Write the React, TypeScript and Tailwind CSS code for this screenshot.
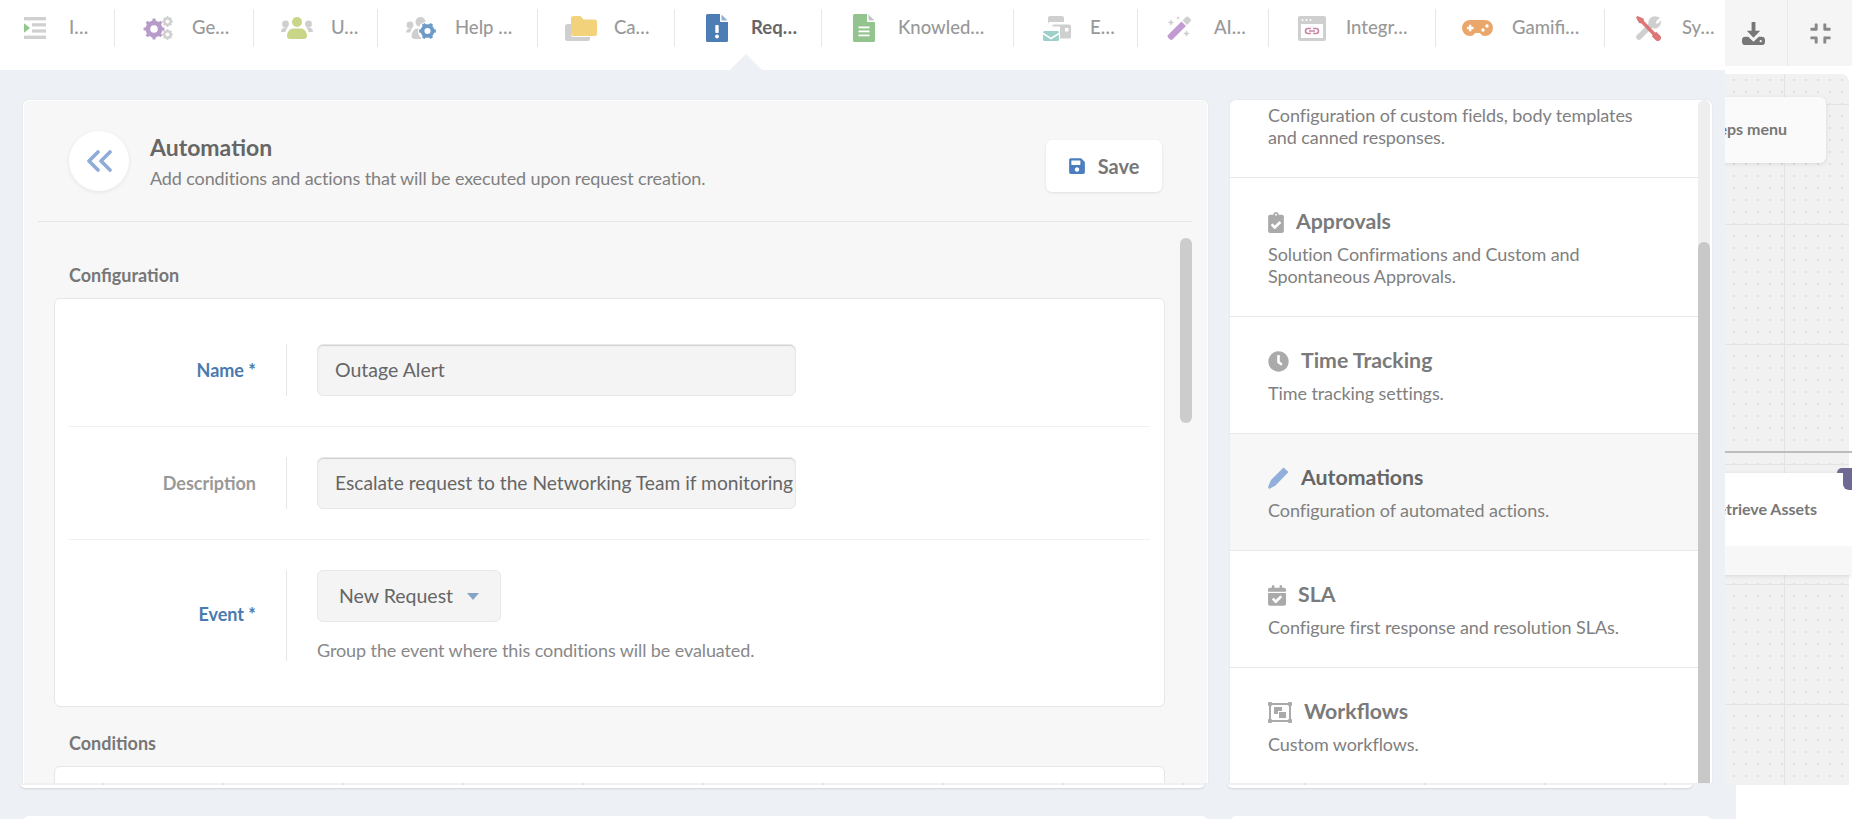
import { FaCalendarCheck, FaClipboardCheck, FaClock, FaCompress, FaSave } from "react-icons/fa";

const gear = (cx: number, cy: number, r: number, teeth = 8) => {
  let d = "";
  const step = (Math.PI * 2) / teeth;
  for (let i = 0; i < teeth; i++) {
    const a = i * step;
    const pts = [
      [a - step * 0.5, r * 0.8],
      [a - step * 0.24, r * 0.82],
      [a - step * 0.17, r],
      [a + step * 0.17, r],
      [a + step * 0.24, r * 0.82],
    ];
    pts.forEach(([t, rad], j) => {
      const x = cx + Math.cos(t) * rad;
      const y = cy + Math.sin(t) * rad;
      d += `${i === 0 && j === 0 ? "M" : "L"}${x.toFixed(2)} ${y.toFixed(2)}`;
    });
  }
  const h = r * 0.36;
  return `${d}Z M${cx - h} ${cy}a${h} ${h} 0 1 0 ${h * 2} 0a${h} ${h} 0 1 0 ${-h * 2} 0Z`;
};

function IndentIcon() {
  return (
    <svg viewBox="0 0 22 22" className="w-[22px] h-[22px] shrink-0">
      <rect y="0" width="22" height="3.4" fill="#d0d0d0" />
      <rect x="8" y="6.2" width="14" height="3.2" fill="#d0d0d0" />
      <rect x="8" y="12.4" width="14" height="3.2" fill="#d0d0d0" />
      <rect y="18.6" width="22" height="3.4" fill="#d0d0d0" />
      <path d="M0 6.2 6 11 0 15.8Z" fill="#8fc78f" />
    </svg>
  );
}

function GearsIcon() {
  return (
    <svg viewBox="0 0 30 24" className="w-[30px] h-[24px] shrink-0">
      <path d={gear(11, 13, 10.5)} fill="#b79cc9" fillRule="evenodd" />
      <path d={gear(24.5, 5.5, 5.5)} fill="#cfcfcf" fillRule="evenodd" />
      <path d={gear(24.5, 18.5, 5.5)} fill="#cfcfcf" fillRule="evenodd" />
    </svg>
  );
}

function UsersIcon() {
  return (
    <svg viewBox="0 0 32 22" className="w-[32px] h-[22px] shrink-0">
      <circle cx="4.5" cy="7" r="3.4" fill="#cfcfcf" />
      <circle cx="27.5" cy="7" r="3.4" fill="#cfcfcf" />
      <path d="M0 15c0-3 2-4.500 4-4.500h3c-1.500 1.200-2.300 2.700-2.500 4.500Z" fill="#cfcfcf" />
      <path d="M32 15c0-3-2-4.500-4-4.500h-3c1.500 1.200 2.300 2.700 2.500 4.500Z" fill="#cfcfcf" />
      <circle cx="16" cy="5" r="5" fill="#c9d688" />
      <path d="M6 19c0-4 3-7.500 6-7.500h8c3 0 6 3.500 6 7.500 0 2-1.500 3-3 3H9c-1.500 0-3-1-3-3Z" fill="#c9d688" />
    </svg>
  );
}

function UsersCogIcon() {
  return (
    <svg viewBox="0 0 31 22" className="w-[31px] h-[22px] shrink-0">
      <circle cx="4" cy="8" r="3.4" fill="#cfcfcf" />
      <path d="M0 15.500c0-2.500 2-4 4-4h2.500c-1.500 1.200-2 2.500-2.300 4Z" fill="#cfcfcf" />
      <circle cx="14.500" cy="5" r="5" fill="#cfcfcf" />
      <path d="M5.500 19c0-4 3-7.500 6-7.500h6c3 0 5 3.500 5 7.500v3h-14c-1.500 0-3-1-3-3Z" fill="#cfcfcf" />
      <circle cx="21.500" cy="14" r="9.500" fill="#fff" />
      <path d={gear(21.5, 14, 8.5, 6)} fill="#6d9bc9" fillRule="evenodd" />
    </svg>
  );
}

function FolderIcon() {
  return (
    <svg viewBox="0 0 32 25" className="w-[32px] h-[25px] shrink-0">
      <path d="M2.500 8H6v10.500A2.500 2.500 0 0 0 8.500 21H25v1.500a2.500 2.500 0 0 1-2.500 2.500h-20A2.500 2.500 0 0 1 0 22.500v-12A2.500 2.500 0 0 1 2.500 8Z" fill="#cfcfcf" />
      <path d="M8.500 0h7l3 3.500h11A2.500 2.500 0 0 1 32 6v11.500a2.500 2.500 0 0 1-2.500 2.500h-21A2.500 2.500 0 0 1 6 17.500v-15A2.500 2.500 0 0 1 8.500 0Z" fill="#f3d27c" />
    </svg>
  );
}

function FileAlertIcon() {
  return (
    <svg viewBox="0 0 22 28" className="w-[22px] h-[28px] shrink-0">
      <path d="M1.500 0H14v7a1 1 0 0 0 1 1h7v18.500a1.500 1.500 0 0 1-1.500 1.500h-19A1.500 1.500 0 0 1 0 26.500v-25A1.500 1.500 0 0 1 1.500 0Z" fill="#4c7db5" />
      <path d="M15.500 0.500 21.500 6.500H15.500Z" fill="#8fb0d6" />
      <rect x="9.300" y="11" width="3.400" height="8" rx="0.800" fill="#fff" />
      <circle cx="11" cy="22.500" r="2" fill="#fff" />
    </svg>
  );
}

function FileLinesIcon() {
  return (
    <svg viewBox="0 0 22 28" className="w-[22px] h-[28px] shrink-0">
      <path d="M1.500 0H14v7a1 1 0 0 0 1 1h7v18.500a1.500 1.500 0 0 1-1.500 1.500h-19A1.500 1.500 0 0 1 0 26.500v-25A1.500 1.500 0 0 1 1.500 0Z" fill="#93c48f" />
      <path d="M15.500 0.500 21.500 6.500H15.500Z" fill="#c4c4c4" />
      <rect x="5.500" y="12.500" width="11" height="1.800" fill="#fff" />
      <rect x="5.500" y="16.500" width="11" height="1.800" fill="#fff" />
      <rect x="5.500" y="20.500" width="11" height="1.800" fill="#fff" />
    </svg>
  );
}

function MessagesIcon() {
  return (
    <svg viewBox="0 0 28 25" className="w-[28px] h-[25px] shrink-0">
      <path d="M5 2a2 2 0 0 1 2-2h12a2 2 0 0 1 2 2v4H7a2 2 0 0 0-2 2Z" fill="#cfcfcf" />
      <path d="M9 10.500a2 2 0 0 1 2-2h15a2 2 0 0 1 2 2V21a1.500 1.500 0 0 1-1.500 1.500H17V10.500Z" fill="#cfcfcf" />
      <rect x="22" y="12" width="3.500" height="3.500" fill="#fff" />
      <path d="M0 16.500a1.500 1.500 0 0 1 1.500-1.500h13a1.500 1.500 0 0 1 1.500 1.500l-8 5-8-5Z" fill="#9dcfcb" />
      <path d="M0 18.500l8 5 8-5v5a1.500 1.500 0 0 1-1.500 1.500h-13A1.500 1.500 0 0 1 0 23.500Z" fill="#9dcfcb" />
    </svg>
  );
}

function WandIcon() {
  return (
    <svg viewBox="0 0 25 24" className="w-[25px] h-[24px] shrink-0">
      <path d="M1 19 14.500 5.500 19 10 5.500 23.500a2 2 0 0 1-2.500 0l-2-2a2 2 0 0 1 0-2.500Z" fill="#c29bd3" />
      <path d="M15.500 4.500 19 1a2 2 0 0 1 2.500 0l2 2a2 2 0 0 1 0 2.500L20 9Z" fill="#cfcfcf" />
      <path d="M4 3l1 2.500L7.500 6.500 5 7.500 4 10 3 7.500.5 6.500 3 5.500Z" fill="#cfcfcf" />
      <path d="M11 0l.7 1.500L13 2l-1.300.5L11 4l-.7-1.500L9 2l1.300-.5Z" fill="#cfcfcf" />
      <path d="M19.500 14l1 2.500 2.500 1-2.500 1-1 2.500-1-2.500-2.500-1 2.500-1Z" fill="#cfcfcf" />
    </svg>
  );
}

function IntegrationIcon() {
  return (
    <svg viewBox="0 0 28 25" className="w-[28px] h-[25px] shrink-0">
      <rect width="28" height="25" rx="2" fill="#cfcfcf" />
      <rect x="3" y="8" width="22" height="14" fill="#fff" />
      <circle cx="4.500" cy="4" r="1" fill="#fff" />
      <circle cx="8.500" cy="4" r="1" fill="#fff" />
      <circle cx="12.500" cy="4" r="1" fill="#fff" />
      <path d="M13 12.500h-3a2.500 2.500 0 0 0 0 5h3m2-5h3a2.500 2.500 0 0 1 0 5h-3m-4-2.500h6" fill="none" stroke="#c988a8" strokeWidth="1.600" />
    </svg>
  );
}

function GamepadIcon() {
  return (
    <svg viewBox="0 0 31 16" className="w-[31px] h-[16px] shrink-0">
      <path d="M8 0h15a8 8 0 0 1 0 16c-2.500 0-4-1-5-3h-5c-1 2-2.500 3-5 3A8 8 0 0 1 8 0Z" fill="#e9a76c" />
      <rect x="5" y="6.800" width="6.500" height="2.400" fill="#fff" />
      <rect x="7" y="4.800" width="2.400" height="6.500" fill="#fff" />
      <circle cx="21" cy="10" r="1.700" fill="#fff" />
      <circle cx="25" cy="6" r="1.700" fill="#fff" />
    </svg>
  );
}

function ToolsIcon() {
  return (
    <svg viewBox="0 0 25 25" className="w-[25px] h-[25px] shrink-0">
      <path d="M24 1.500l-4 4v2l2 0 2.800-3A6.500 6.500 0 0 1 16 12L5 23a2.800 2.800 0 0 1-4-4L12.500 8A6.500 6.500 0 0 1 20.500.500Z" fill="#cfcfcf" />
      <path d="M1.500 0 0 1.500 3 7l2.500.5L16.500 19l-.5 1.500 3.500 3.500a2.500 2.500 0 0 0 4.500-4.500l-3.500-3.500-1.500.5L8 5l-.5-2.500Z" fill="#dd7777" />
    </svg>
  );
}

function DownloadIcon() {
  return (
    <svg viewBox="0 0 24 24" className="w-[23px] h-[23px]">
      <path d="M10 0h4v9h5l-7 7.500L5 9h5Z" fill="#777" />
      <path d="M3.500 15.500H6.500L12 20.500 17.500 15.500H20.500A3.500 3.500 0 0 1 24 19v1.500A3.500 3.500 0 0 1 20.500 24h-17A3.500 3.500 0 0 1 0 20.500V19A3.500 3.500 0 0 1 3.500 15.500Z" fill="#777" />
      <circle cx="19.500" cy="20" r="1.200" fill="#f5f5f5" />
    </svg>
  );
}

function BackIcon() {
  return (
    <svg viewBox="0 0 26 22" className="h-[22px] w-[26px]" fill="none" stroke="#8fabd8" strokeWidth="3.600" strokeLinecap="round" strokeLinejoin="round">
      <path d="M12 2 3 11l9 9" />
      <path d="M24 2l-9 9 9 9" />
    </svg>
  );
}

function PencilIcon() {
  return (
    <svg viewBox="0 0 21 22" className="w-[21px] h-[22px] shrink-0">
      <path d="M0 20 3 13 15.500 0.500 20.500 5 7.500 18.500 1 22Z" fill="#92afdc" />
    </svg>
  );
}

function WorkflowIcon() {
  return (
    <svg viewBox="0 0 24 21" className="w-[24px] h-[21px] shrink-0">
      <path d="M2 2h20v17H2Z" fill="none" stroke="#aaa" strokeWidth="2" />
      <rect width="4" height="4" rx="1" fill="#aaa" />
      <rect x="20" width="4" height="4" rx="1" fill="#aaa" />
      <rect y="17" width="4" height="4" rx="1" fill="#aaa" />
      <rect x="20" y="17" width="4" height="4" rx="1" fill="#aaa" />
      <rect x="6" y="5" width="8" height="7" fill="#aaa" />
      <rect x="10" y="9" width="8" height="7" fill="#fff" />
      <rect x="11" y="10" width="7" height="6" fill="#aaa" />
    </svg>
  );
}

const navItems = [
  { label: "I…", cls: "w-[115px] pl-[24px]", text: "ml-[23px] font-medium text-[#999]", icon: <IndentIcon /> },
  { label: "Ge…", cls: "w-[139px] pl-[28px]", text: "ml-[19px] font-medium text-[#999]", icon: <GearsIcon /> },
  { label: "U…", cls: "w-[124px] pl-[27px]", text: "ml-[18px] font-medium text-[#999]", icon: <UsersIcon /> },
  { label: "Help …", cls: "w-[160px] pl-[28px]", text: "ml-[18px] font-medium text-[#999]", icon: <UsersCogIcon /> },
  { label: "Ca…", cls: "w-[137px] pl-[27px]", text: "ml-[17px] font-medium text-[#999]", icon: <FolderIcon /> },
  { label: "Req…", cls: "w-[147px] pl-[31px]", text: "ml-[23px] font-bold text-[#666]", icon: <FileAlertIcon /> },
  { label: "Knowled…", cls: "w-[192px] pl-[31px]", text: "ml-[23px] font-medium text-[#999]", icon: <FileLinesIcon /> },
  { label: "E…", cls: "w-[124px] pl-[29px]", text: "ml-[19px] font-medium text-[#999]", icon: <MessagesIcon /> },
  { label: "AI…", cls: "w-[131px] pl-[29px]", text: "ml-[22px] font-medium text-[#999]", icon: <WandIcon /> },
  { label: "Integr…", cls: "w-[167px] pl-[29px]", text: "ml-[20px] font-medium text-[#999]", icon: <IntegrationIcon /> },
  { label: "Gamifi…", cls: "w-[169px] pl-[26px]", text: "ml-[19px] font-medium text-[#999]", icon: <GamepadIcon /> },
  { label: "Sy…", cls: "w-[120px] pl-[31px] border-r-0", text: "ml-[21px] font-medium text-[#999]", icon: <ToolsIcon /> },
];

const settings = [
  { title: "Approvals", desc: ["Solution Confirmations and Custom and", "Spontaneous Approvals."], icon: <FaClipboardCheck className="w-[16px] h-[21px] text-[#aaa]" /> },
  { title: "Time Tracking", desc: ["Time tracking settings."], icon: <FaClock className="w-[21px] h-[21px] text-[#aaa]" /> },
  { title: "Automations", desc: ["Configuration of automated actions."], active: true, icon: <PencilIcon /> },
  { title: "SLA", desc: ["Configure first response and resolution SLAs."], icon: <FaCalendarCheck className="w-[18px] h-[21px] text-[#aaa]" /> },
  { title: "Workflows", desc: ["Custom workflows."], last: true, icon: <WorkflowIcon /> },
];

function CardEdge({ ticks }: { ticks: string }) {
  return (
    <div className="h-[5px] -ml-[3px] mr-[3px] rounded-b-md bg-white shadow-[0_1px_2px_rgba(0,0,0,0.12)]">
      <div className={`h-[2px] bg-[#f0f0f0] bg-[linear-gradient(90deg,#dcdcdc_1px,transparent_1px)] bg-[size:120px_100%] ${ticks}`} />
    </div>
  );
}

function Background() {
  return (
    <div className="flex flex-col h-full bg-white">
      <div className="flex justify-end h-[66px] bg-[#f5f5f5] shrink-0">
        <div className="flex items-center justify-center w-[67px]">
          <DownloadIcon />
        </div>
        <div className="flex items-center justify-center w-[65px] border-l border-[#e8e8e8]">
          <FaCompress className="w-[23px] h-[23px] text-[#888]" />
        </div>
      </div>
      {/* workflow canvas, nodes sit at their own coordinates */}
      <div className="relative mt-[8px] mr-[3px] h-[711px] shrink-0 rounded-tr-lg bg-[#f1f1f1] bg-[linear-gradient(#e3e3e3_1px,transparent_1px),linear-gradient(90deg,#e3e3e3_1px,transparent_1px),radial-gradient(circle,#e0e0e0_1px,transparent_1.2px)] bg-[size:120px_120px,120px_120px,12px_12px] bg-[position:0_30px,104px_0,0_0]">
        <div className="absolute left-[1662px] top-[23px] flex items-center justify-end w-[164px] h-[66px] pr-[39px] pb-[2px] rounded-md bg-[#fafafa] shadow-[0_1px_4px_rgba(0,0,0,0.1)] text-[16px] font-bold text-[#777]">
          Steps menu
        </div>
        <div className="absolute left-[1640px] top-[377px] w-[212px] h-[2px] bg-[#bdbdbd]" />
        <div className="absolute left-[1668px] top-[399px] w-[184px] h-[102px] bg-white shadow-[0_1px_4px_rgba(0,0,0,0.1)]">
          <div className="flex items-center justify-end h-[73px] pr-[35px] pb-[2px] text-[16px] font-bold text-[#777] whitespace-nowrap">Retrieve Assets</div>
          <div className="h-[29px] bg-[#f7f7f7]" />
        </div>
        <div className="absolute left-[1843px] top-[394px] w-[9px] h-[22px] rounded-bl-md bg-[#6e6a93]" />
        <div className="absolute left-[1837px] top-[394px] w-[8px] h-[5px] rounded-tl-md bg-[#6e6a93]" />
      </div>
      <div className="flex-1 w-[1736px] bg-[#edf0f5]" />
    </div>
  );
}

export default function App() {
  return (
    <div className="relative h-screen w-full overflow-hidden font-[Lato,sans-serif]">
      <Background />
      <div className="absolute inset-y-0 left-0 flex w-[1725px] flex-col bg-[#edf0f5]">
        <div className="relative flex h-[70px] shrink-0 bg-white pt-[9px]">
          {navItems.map((item) => (
            <div key={item.label} className={`flex h-[38px] shrink-0 items-center border-r border-[#e6e6e6] ${item.cls}`}>
              {item.icon}
              <span className={`text-[18.5px] whitespace-nowrap ${item.text}`}>{item.label}</span>
            </div>
          ))}
          <div className="absolute left-[730px] bottom-0 w-0 h-0 border-x-[16px] border-b-[16px] border-x-transparent border-b-[#edf0f5]" />
        </div>

        <div className="flex ml-[23px] mt-[30px] shrink-0">
          {/* left card */}
          <div className="w-[1185px]">
            <div className="flex h-[683px] flex-col rounded-t-md border border-b-0 border-white bg-[#f7f7f7] shadow-[0_0_2px_rgba(0,0,0,0.08)]">
              <div className="ml-[14px] mr-[15px] flex h-[121px] shrink-0 items-center border-b border-[#e6e6e6] pl-[31px] pr-[30px]">
                <div className="flex h-[60px] w-[60px] items-center justify-center rounded-full bg-white shadow-[0_1px_4px_rgba(0,0,0,0.08)]">
                  <BackIcon />
                </div>
                <div className="ml-[21px]">
                  <div className="text-[23px] font-bold leading-[26px] text-[#666]">Automation</div>
                  <div className="mt-[7px] text-[18px] leading-[22px] tracking-[-0.12px] text-[#808080]">Add conditions and actions that will be executed upon request creation.</div>
                </div>
                <button className="ml-auto mt-[9px] flex h-[52px] w-[116px] items-center justify-center rounded-md bg-white text-[20px] font-bold text-[#777] shadow-[0_1px_3px_rgba(0,0,0,0.1)]">
                  <FaSave className="h-[18px] w-[18px] text-[#4a7ebf]" />
                  <span className="ml-[12px] mr-[1px]">Save</span>
                </button>
              </div>

              <div className="flex min-h-0 flex-1">
                <div className="flex-1 overflow-hidden">
                  <div className="ml-[45px] mt-[41px] text-[18px] font-bold leading-[24px] text-[#777]">Configuration</div>
                  <div className="ml-[30px] mt-[11px] w-[1111px] rounded-md border border-[#e6e6e6] bg-white px-[14px] pb-[45px]">
                    <div className="flex border-b border-[#f0f0f0] pb-[30px] pt-[45px]">
                      <div className="w-[187px] self-center text-right text-[18px] font-bold text-[#4a7ab0]">Name&nbsp;*</div>
                      <div className="ml-[30px] border-l border-[#e6e6e6] pl-[30px]">
                        <div className="flex h-[52px] w-[479px] items-center overflow-hidden whitespace-nowrap rounded-md border border-[#e8e8e8] bg-[#f4f4f4] pl-[17px] text-[19.5px] text-[#666] shadow-[inset_0_1px_1px_#cfcfcf]">Outage Alert</div>
                      </div>
                    </div>
                    <div className="flex border-b border-[#f0f0f0] pb-[30px] pt-[30px]">
                      <div className="w-[187px] self-center text-right text-[18px] font-bold text-[#999]">Description</div>
                      <div className="ml-[30px] border-l border-[#e6e6e6] pl-[30px]">
                        <div className="flex h-[52px] w-[479px] items-center overflow-hidden whitespace-nowrap rounded-md border border-[#e8e8e8] bg-[#f4f4f4] pl-[17px] text-[19.2px] text-[#666] shadow-[inset_0_1px_1px_#cfcfcf]">Escalate request to the Networking Team if monitoring detects an outage</div>
                      </div>
                    </div>
                    <div className="flex pt-[30px]">
                      <div className="mb-[2px] w-[187px] self-center text-right text-[18px] font-bold text-[#4a7ab0]">Event&nbsp;*</div>
                      <div className="ml-[30px] border-l border-[#e6e6e6] pl-[30px]">
                        <div className="flex h-[52px] w-[184px] items-center rounded-md border border-[#e8e8e8] bg-[#f4f4f4] pl-[21px] text-[19.5px] text-[#666]">
                          New Request
                          <span className="ml-[14px] h-0 w-0 border-x-[6px] border-t-[7px] border-x-transparent border-t-[#86a5c5]" />
                        </div>
                        <div className="mt-[17px] text-[18px] leading-[22px] tracking-[-0.1px] text-[#888]">Group the event where this conditions will be evaluated.</div>
                      </div>
                    </div>
                  </div>
                  <div className="ml-[45px] mt-[24px] text-[18px] font-bold leading-[24px] text-[#777]">Conditions</div>
                  <div className="ml-[30px] mt-[11px] h-[40px] w-[1111px] rounded-t-md border border-[#e6e6e6] bg-white" />
                </div>
                <div className="mr-[15px] w-[12px] shrink-0 pt-[16px]">
                  <div className="h-[185px] rounded-full bg-[#ccc]" />
                </div>
              </div>
            </div>
            <CardEdge ticks="bg-[position:83px_0]" />
          </div>

          {/* right card */}
          <div className="ml-[22px] w-[482px]">
            <div className="flex h-[683px] rounded-t-md bg-white shadow-[0_0_2px_rgba(0,0,0,0.08)]">
              <div className="min-w-0 flex-1 overflow-hidden">
                <div className="h-[78px] border-b border-[#e8e8e8] pl-[38px] pt-[4px] text-[18px] leading-[22px] tracking-[-0.08px] text-[#808080]">
                  <div>Configuration of custom fields, body templates</div>
                  <div>and canned responses.</div>
                </div>
                {settings.map((s) => (
                  <div
                    key={s.title}
                    className={`pl-[38px] pt-[32px] pb-[29px] ${s.last ? "" : "border-b border-[#e8e8e8]"} ${s.active ? "bg-[#f7f7f7]" : ""}`}
                  >
                    <div className="flex h-[24px] items-center gap-[12px]">
                      {s.icon}
                      <span className={`text-[21.3px] font-bold ${s.active ? "text-[#666]" : "text-[#7a7a7a]"}`}>{s.title}</span>
                    </div>
                    <div className="mt-[9px] text-[18px] leading-[22px] tracking-[-0.08px] text-[#808080]">
                      {s.desc.map((line) => (
                        <div key={line}>{line}</div>
                      ))}
                    </div>
                  </div>
                ))}
              </div>
              <div className="mr-[2px] flex w-[12px] shrink-0 flex-col rounded-t-md bg-[#eee]">
                <div className="mt-[142px] flex-1 rounded-t-md bg-[#c8c8c8]" />
              </div>
            </div>
            <div className="mr-[16px]">
              <CardEdge ticks="bg-[position:77px_0]" />
            </div>
          </div>
        </div>

        <div className="ml-[23px] mt-[28px] flex h-[20px] shrink-0">
          <div className="w-[1185px] rounded-t-md bg-white" />
          <div className="ml-[22px] w-[482px] rounded-t-md bg-white" />
        </div>
      </div>
    </div>
  );
}
